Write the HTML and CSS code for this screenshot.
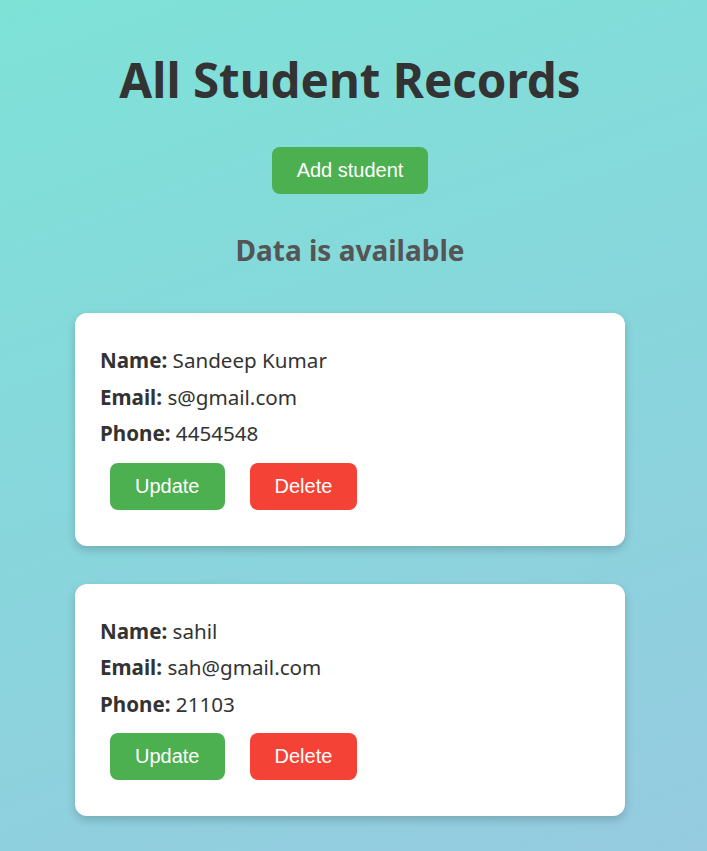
FILE: index.html
```html
<!DOCTYPE html>
<html>
<head>
<meta charset="utf-8">
<link rel="stylesheet" href="styles.css">
</head>
<body>
<div class="page">
  <h1 class="title">All Student Records</h1>
  <button class="btn btn-add">Add student</button>
  <h2 class="status">Data is available</h2>
  <div class="list">
    <div class="card">
      <p class="row"><b>Name:</b> Sandeep Kumar</p>
      <p class="row"><b>Email:</b> s@gmail.com</p>
      <p class="row"><b>Phone:</b> 4454548</p>
      <div class="actions">
        <button class="btn btn-update">Update</button>
        <button class="btn btn-delete">Delete</button>
      </div>
    </div>
    <div class="card">
      <p class="row"><b>Name:</b> sahil</p>
      <p class="row"><b>Email:</b> sah@gmail.com</p>
      <p class="row"><b>Phone:</b> 21103</p>
      <div class="actions">
        <button class="btn btn-update">Update</button>
        <button class="btn btn-delete">Delete</button>
      </div>
    </div>
  </div>
</div>
</body>
</html>
```
FILE: styles.css
```css
html, body {
  margin: 0;
  padding: 0;
  min-height: 100%;
}
body {
  background: linear-gradient(160deg, #7ee2d7 0%, #88d6dc 50%, #96cbe0 100%);
  font-family: "Noto Sans", "Open Sans", sans-serif;
  color: #333;
  min-height: 851px;
}
.page {
  display: flex;
  flex-direction: column;
  align-items: center;
  padding-top: 48px;
  padding-right: 7px;
}
.title {
  margin: 0;
  font-size: 47.5px;
  line-height: 64px;
  font-weight: 700;
  color: #333;
}
.btn {
  font-family: "Liberation Sans", Arial, sans-serif;
  font-size: 20px;
  color: #fff;
  border: none;
  border-radius: 8px;
  height: 47px;
  padding: 0 25px;
}
.btn-add {
  margin-top: 35px;
  background: #4caf50;
}
.status {
  margin: 36px 0 0;
  font-size: 28px;
  line-height: 40px;
  color: #555;
}
.list {
  margin-top: 43px;
  display: flex;
  flex-direction: column;
  gap: 38px;
}
.card {
  width: 550px;
  box-sizing: border-box;
  background: #fff;
  border-radius: 12px;
  padding: 24px 25px 26px;
  box-shadow: 0 4px 10px rgba(0, 0, 0, 0.18);
}
.row {
  margin: 10px 0;
  font-size: 20.6px;
  line-height: 26.5px;
  color: #333;
}
.actions {
  display: flex;
  gap: 25px;
  padding-left: 10px;
  margin-top: 16px;
  margin-bottom: 10px;
}
.btn-update {
  background: #4caf50;
}
.btn-delete {
  background: #f44336;
}
```
